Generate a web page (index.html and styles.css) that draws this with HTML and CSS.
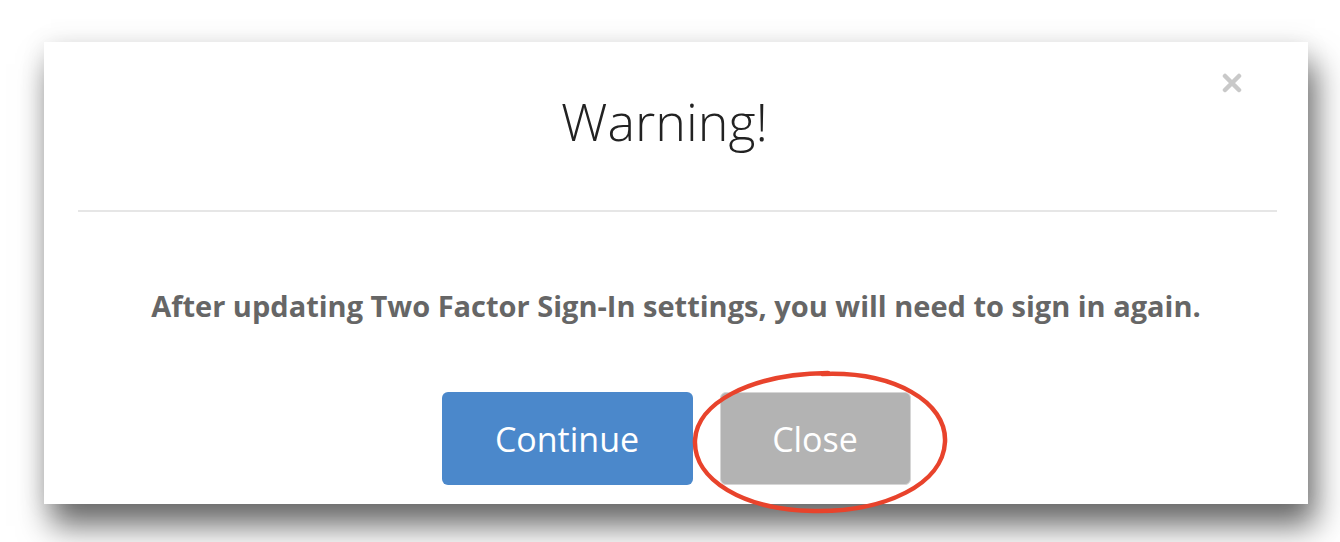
FILE: index.html
```html
<!DOCTYPE html>
<html lang="en">
<head>
    <meta charset="UTF-8">
    <meta name="viewport" content="width=device-width, initial-scale=1.0">
    <title>Warning</title>
    <link rel="stylesheet" href="styles.css">
</head>
<body>
    <div class="modal">
        <div class="modal-header">
            <h1 class="modal-title">Warning!</h1>
            <button class="modal-close" aria-label="Close">
                <svg width="20" height="20" viewBox="0 0 20 20">
                    <path d="M3 3 L17 17 M17 3 L3 17" stroke="#c9c9c9" stroke-width="4.5" stroke-linecap="round"/>
                </svg>
            </button>
        </div>
        <div class="modal-body">
            <p class="modal-text">After updating Two Factor Sign-In settings, you will need to sign in again.</p>
            <div class="modal-actions">
                <button class="btn btn-primary">Continue</button>
                <button class="btn btn-secondary">Close</button>
                <svg class="circle-mark" width="270" height="160" viewBox="0 0 270 160">
                    <path d="M136 12 C 208 9, 261 40, 259 80 C 257 122, 200 150, 128 149 C 58 148, 7 118, 9 78 C 11 42, 62 12, 142 11" fill="none" stroke="#e8432c" stroke-width="4.5" stroke-linecap="round"/>
                </svg>
            </div>
        </div>
    </div>
</body>
</html>
```

FILE: styles.css
```css
body {
    margin: 0;
    padding: 42px 32px 0 44px;
    height: 542px;
    box-sizing: border-box;
    overflow: hidden;
    background-color: #ffffff;
    font-family: 'Open Sans', 'Liberation Sans', sans-serif;
}

.modal {
    height: 462px;
    background: #ffffff;
    box-shadow: 7px 22px 30px rgba(0, 0, 0, 0.58), 0 0 24px rgba(0, 0, 0, 0.08);
    display: flex;
    flex-direction: column;
}

.modal-header {
    position: relative;
    height: 168px;
    margin: 0 31px 0 34px;
    border-bottom: 2px solid #e6e6e6;
    display: flex;
    justify-content: center;
    align-items: center;
}

.modal-title {
    margin: 0 26px 12px 0;
    font-size: 52px;
    font-weight: 300;
    color: #222222;
}

.modal-close {
    position: absolute;
    top: 31px;
    right: 35px;
    padding: 0;
    border: none;
    background: none;
    line-height: 0;
    cursor: pointer;
}

.modal-body {
    display: flex;
    flex-direction: column;
    align-items: center;
}

.modal-text {
    margin: 74px 0 0 0;
    font-size: 29px;
    font-weight: 700;
    color: #666666;
}

.modal-actions {
    position: relative;
    display: flex;
    gap: 27px;
    margin-top: 67px;
}

.btn {
    height: 93px;
    border: none;
    border-radius: 6px;
    color: #ffffff;
    font-family: 'Open Sans', 'Liberation Sans', sans-serif;
    font-size: 34px;
    cursor: pointer;
}

.btn-primary {
    width: 251px;
    background-color: #4b88cb;
}

.btn-secondary {
    width: 191px;
    background-color: #b3b3b3;
    border: 1px solid #d6d6d6;
}

.circle-mark {
    position: absolute;
    left: 244px;
    top: -30px;
    pointer-events: none;
}
```
